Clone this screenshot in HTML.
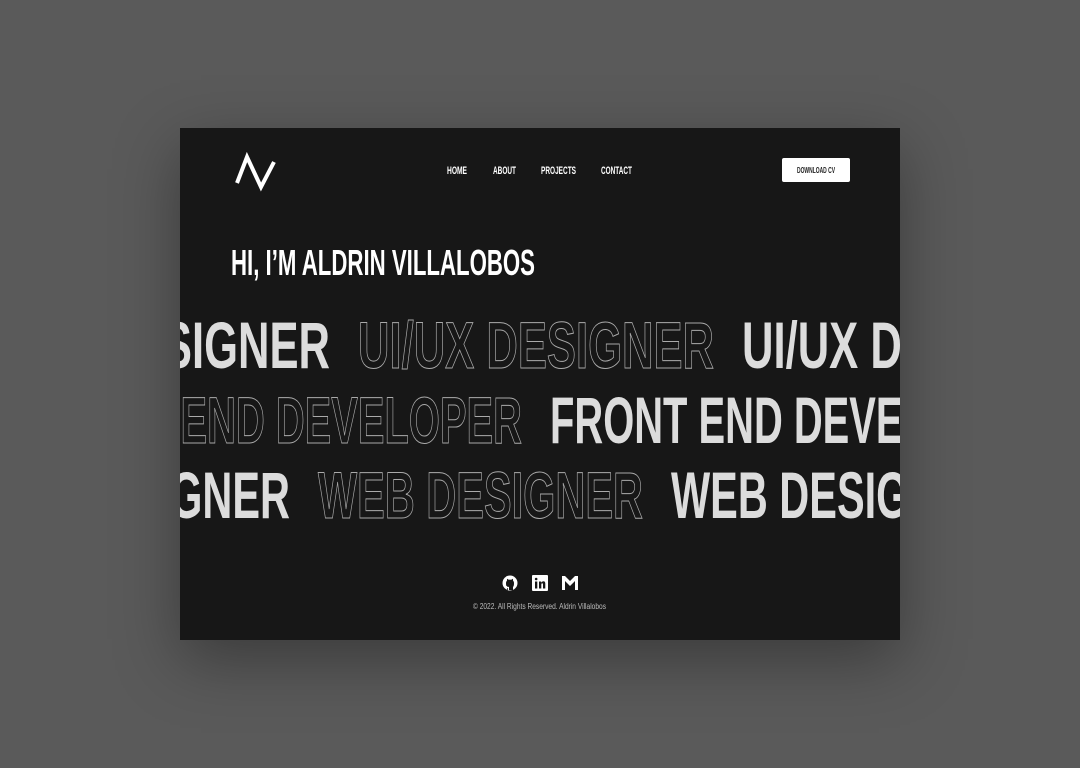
<!DOCTYPE html>
<html><head><meta charset="utf-8"><style>
html,body{margin:0;padding:0;background:#5a5a5a;width:1080px;height:768px;overflow:hidden}
.card{position:absolute;left:180px;top:128px;width:720px;height:512px;background:#171717;box-shadow:0 20px 60px rgba(0,0,0,0.35);overflow:hidden}
svg{position:absolute;left:0;top:0}
text{font-family:"Liberation Sans Narrow","Liberation Sans",sans-serif;font-weight:bold}
</style></head><body>
<div class="card">
<svg width="720" height="512" viewBox="180 128 720 512">
  <polyline points="237,183 247,157 261,187 274,162" fill="none" stroke="#fff" stroke-width="4" stroke-linejoin="miter"/>
  <g fill="#fff" font-size="11">
    <text x="447" y="174" textLength="20" lengthAdjust="spacingAndGlyphs">HOME</text>
    <text x="493" y="174" textLength="23" lengthAdjust="spacingAndGlyphs">ABOUT</text>
    <text x="541" y="174" textLength="35" lengthAdjust="spacingAndGlyphs">PROJECTS</text>
    <text x="601" y="174" textLength="31" lengthAdjust="spacingAndGlyphs">CONTACT</text>
  </g>
  <rect x="782" y="158" width="68" height="24" rx="2" fill="#fff"/>
  <text x="797" y="173" font-size="8" fill="#222" textLength="38" lengthAdjust="spacingAndGlyphs">DOWNLOAD CV</text>
  <text x="231" y="275" font-size="36" fill="#fff" textLength="304" lengthAdjust="spacingAndGlyphs">HI, I’M ALDRIN VILLALOBOS</text>
  <g font-size="66">
    <text x="-26" y="368" fill="#dcdcdc" textLength="356" lengthAdjust="spacingAndGlyphs">UI/UX DESIGNER</text>
    <text x="358" y="368" fill="none" stroke="#aaa" stroke-width="1" textLength="356" lengthAdjust="spacingAndGlyphs">UI/UX DESIGNER</text>
    <text x="742" y="368" fill="#dcdcdc" textLength="356" lengthAdjust="spacingAndGlyphs">UI/UX DESIGNER</text>

    <text x="32" y="443" fill="none" stroke="#aaa" stroke-width="1" textLength="490" lengthAdjust="spacingAndGlyphs">FRONT END DEVELOPER</text>
    <text x="550" y="443" fill="#dcdcdc" textLength="490" lengthAdjust="spacingAndGlyphs">FRONT END DEVELOPER</text>

    <text x="-35" y="518" fill="#dcdcdc" textLength="325" lengthAdjust="spacingAndGlyphs">WEB DESIGNER</text>
    <text x="318" y="518" fill="none" stroke="#aaa" stroke-width="1" textLength="325" lengthAdjust="spacingAndGlyphs">WEB DESIGNER</text>
    <text x="671" y="518" fill="#dcdcdc" textLength="325" lengthAdjust="spacingAndGlyphs">WEB DESIGNER</text>
  </g>
  <!-- github -->
  <g transform="translate(502,575)">
    <circle cx="8" cy="8" r="7.5" fill="#fff"/>
    <path d="M5 15 V12 Q4 11 4 8.5 Q4 6.5 5 5.5 L5 3.8 L6.8 4.8 Q8 4.4 9.2 4.8 L11 3.8 L11 5.5 Q12 6.5 12 8.5 Q12 11 11 12 V15 Z" fill="#171717"/>
    <path d="M6.4 15.5 V12.5 Q5 12.8 4.2 11.2" stroke="#fff" stroke-width="1.2" fill="none"/>
  </g>
  <!-- linkedin -->
  <g transform="translate(532,575)">
    <rect x="0" y="0" width="16" height="16" rx="1" fill="#fff"/>
    <rect x="3" y="6.5" width="2.3" height="7" fill="#171717"/>
    <circle cx="4.15" cy="4" r="1.3" fill="#171717"/>
    <path d="M7 6.5 H9.2 V7.6 Q10 6.3 11.5 6.3 Q13.3 6.3 13.3 8.8 V13.5 H11 V9.3 Q11 8.3 10.2 8.3 Q9.3 8.3 9.3 9.5 V13.5 H7 Z" fill="#171717"/>
  </g>
  <!-- gmail M -->
  <path d="M562 590 V576 H565 L570 581 L575 576 H578 V590 H575 V581 L570 586 L565 581 V590 Z" fill="#fff"/>
  <text x="473" y="609" font-size="8" font-weight="normal" fill="#bbb" textLength="133" lengthAdjust="spacingAndGlyphs" style="font-weight:normal">© 2022. All Rights Reserved. Aldrin Villalobos</text>
</svg>
</div>
</body></html>
